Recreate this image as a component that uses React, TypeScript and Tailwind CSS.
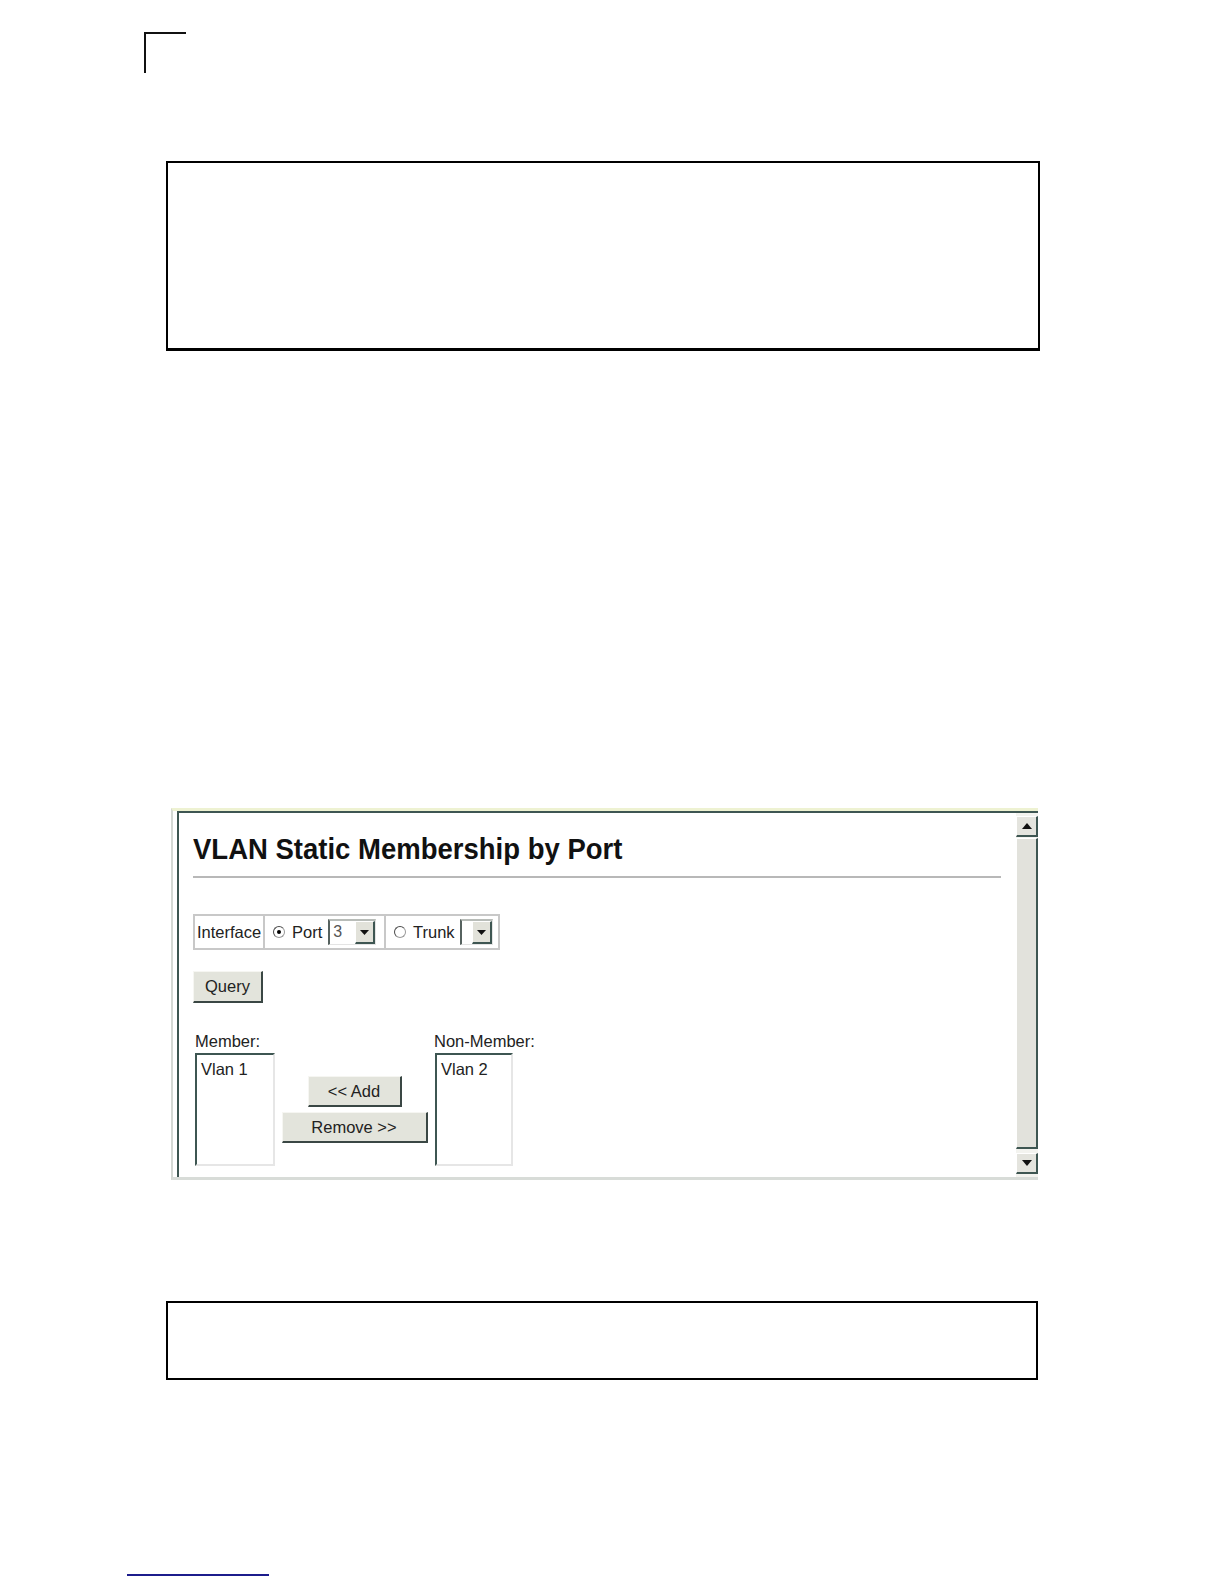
import React from "react";

const dark = "border-[#3e5652]";

function Radio({ checked }: { checked?: boolean }) {
  return (
    <span className="inline-flex w-[12px] h-[12px] rounded-full border-[1.5px] border-[#9a9a9a] border-t-[#4a4a4a] border-l-[#4a4a4a] bg-white items-center justify-center">
      {checked ? <span className="w-[4px] h-[4px] rounded-full bg-black" /> : null}
    </span>
  );
}

function Select({ value, width }: { value: string; width: string }) {
  return (
    <div className={`flex h-[26px] ${width} bg-white border-l-2 border-t-2 border-l-[#56625f] border-t-[#b8bcb8] border-r border-b border-r-[#e4e4e4] border-b-[#e4e4e4]`}>
      <div className="flex-1 pl-[3px] leading-[22px] text-[16px] text-[#555]">{value}</div>
      <div className="w-[20px] h-full bg-[#e2e2da] border-r-2 border-b-2 border-r-[#3e5652] border-b-[#3e5652] border-l border-t border-l-white border-t-white flex items-center justify-center">
        <svg width="9" height="5" viewBox="0 0 9 5"><path d="M0 0H9L4.5 5Z" fill="#111" /></svg>
      </div>
    </div>
  );
}

function Btn({ children, w }: { children: React.ReactNode; w: string }) {
  return (
    <div className={`${w} h-[31px] bg-[#e3e4dc] border-t border-l border-t-[#f6f6f2] border-l-[#f6f6f2] border-r-2 border-b-2 border-r-[#3a4744] border-b-[#3a4744] flex items-center justify-center text-[16.5px] text-[#222]`}>
      {children}
    </div>
  );
}

function ListBox({ item, w }: { item: string; w: string }) {
  return (
    <div className={`${w} h-[113px] bg-white border-l-2 border-t-2 ${dark} border-r-2 border-b-2 border-r-[#e6e6e6] border-b-[#e6e6e6] pl-[4px] pt-[5px] text-[16.5px] leading-[18px] text-[#222]`}>
      {item}
    </div>
  );
}

function ScrollBtn({ up }: { up?: boolean }) {
  return (
    <div className="h-[21px] w-full bg-[#e4e4de] border-t border-l border-t-white border-l-white border-r-2 border-b-2 border-r-[#3e5652] border-b-[#3e5652] flex items-center justify-center">
      <svg width="10" height="6" viewBox="0 0 10 6">
        {up ? <path d="M0 6H10L5 0Z" fill="#111" /> : <path d="M0 0H10L5 6Z" fill="#111" />}
      </svg>
    </div>
  );
}

export default function App() {
  return (
    <div className="relative w-[1224px] h-[1584px] bg-white overflow-hidden font-['Liberation_Sans',Arial,sans-serif] text-black">
      {/* corner crop mark */}
      <div className="pt-[32px] pl-[144px]">
        <div className="w-[42px] h-[41px] border-l-2 border-t-2 border-[#111]" />
      </div>

      {/* first box */}
      <div className="mt-[88px] ml-[166px] w-[874px] h-[190px] border-2 border-b-[3px] border-black" />

      {/* screenshot frame */}
      <div className="mt-[457px] ml-[171px] w-[867px] h-[372px] flex flex-col bg-white border-l-2 border-l-[#d4d8d4] border-t-[3px] border-t-[#eef2d2] border-b-[3px] border-b-[#d8dcd8] pl-[4px]">
        <div className={`flex-1 flex flex-row border-l-2 border-t-2 ${dark}`}>
          <div className="flex-1 pl-[14px] flex flex-col">
            <h1 className="mt-[20px] text-[27.5px] leading-[32px] font-bold text-[#111] scale-y-[1.1] origin-center">
              VLAN Static Membership by Port
            </h1>
            <div className="mt-[11px] w-[808px] h-[2px] bg-[#b8b8b8]" />

            <div className="mt-[36px] flex h-[36px] w-[307px] border-2 border-[#c8c8c8] text-[16.5px] text-[#222]">
              <div className="w-[70px] flex items-center pl-[2px] border-r-2 border-[#c8c8c8]">Interface</div>
              <div className="w-[121px] flex items-center pl-[8px] border-r-2 border-[#c8c8c8]">
                <Radio checked />
                <span className="ml-[7px]">Port</span>
                <div className="ml-[6px]">
                  <Select value="3" width="w-[48px]" />
                </div>
              </div>
              <div className="flex-1 flex items-center pl-[8px]">
                <Radio />
                <span className="ml-[7px]">Trunk</span>
                <div className="ml-[5px]">
                  <Select value="" width="w-[33px]" />
                </div>
              </div>
            </div>

            <div className="mt-[21px]">
              <div className="w-[70px] h-[32px] bg-[#e3e4dc] border-t border-l border-t-[#f6f6f2] border-l-[#f6f6f2] border-r-2 border-b-2 border-r-[#3a4744] border-b-[#3a4744] flex items-center justify-center text-[16.5px] text-[#222]">
                Query
              </div>
            </div>

            <div className="mt-[29px] ml-[2px] grid grid-cols-[80px_159px_auto] grid-rows-[18px_113px] gap-y-[3px] text-[16.5px] leading-[18px] text-[#222]">
              <div>Member:</div>
              <div />
              <div>Non-Member:</div>
              <ListBox item="Vlan 1" w="w-[80px]" />
              <div className="flex flex-col items-center justify-center gap-[5px]">
                <Btn w="w-[94px]">&lt;&lt; Add</Btn>
                <Btn w="w-[146px]">Remove &gt;&gt;</Btn>
              </div>
              <div className="pl-[1px]">
                <ListBox item="Vlan 2" w="w-[78px]" />
              </div>
            </div>
          </div>

          {/* scrollbar */}
          <div className="w-[22px] flex flex-col bg-[#f3f3ef] pt-[3px] pb-[3px]">
            <ScrollBtn up />
            <div className="mt-[1px] flex-1 bg-[#e2e2dc] border-t border-l border-t-white border-l-white border-r-2 border-b-2 border-r-[#3e5652] border-b-[#3e5652]" />
            <div className="h-[4px]" />
            <ScrollBtn />
          </div>
        </div>
      </div>

      {/* second box */}
      <div className="mt-[121px] ml-[166px] w-[872px] h-[79px] border-2 border-black" />

      {/* footer link line */}
      <div className="mt-[194px] ml-[127px] w-[142px] h-[2px] bg-[#1c1c8c]" />
    </div>
  );
}
